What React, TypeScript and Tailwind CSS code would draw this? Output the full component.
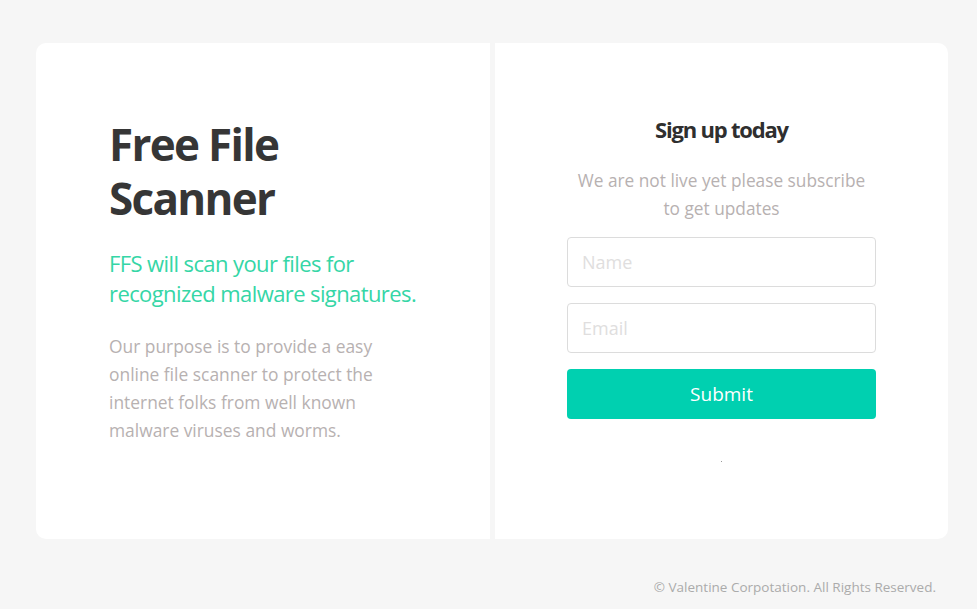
export default function App() {
  return (
    <div className="min-h-[609px] bg-[#f6f6f6] pl-[36px] pt-[43px] font-['Open_Sans',sans-serif]">
      <div className="flex h-[496px] w-[912px] gap-[5px] overflow-hidden rounded-[10px]">
        {/* left: intro */}
        <div className="w-[454px] bg-white pl-[73px] pt-[74px]">
          <h1 className="text-[44px] font-bold leading-[54px] tracking-[-1.7px] text-[#363636]">
            Free File
            <br />
            Scanner
          </h1>
          <p className="mt-[23px] w-[330px] text-[22px] leading-[30px] tracking-[-0.6px] text-[#35d6a6]">
            FFS will scan your files for recognized malware signatures.
          </p>
          <p className="mt-[24px] w-[290px] text-[17.4px] leading-[28px] text-[#b7b1b1]">
            Our purpose is to provide a easy online file scanner to protect the internet folks from well known malware
            viruses and worms.
          </p>
        </div>

        {/* right: signup form */}
        <div className="flex flex-1 flex-col items-center bg-white pt-[70px]">
          <h2 className="text-[22px] font-bold leading-[32px] tracking-[-1.2px] text-[#2f2f2f]">Sign up today</h2>
          <p className="mt-[22px] w-[300px] text-center text-[17.3px] leading-[28px] text-[#b7b1b1]">
            We are not live yet please subscribe to get updates
          </p>
          <form className="mt-[14px] flex w-[309px] flex-col gap-[16px]" onSubmit={(e) => e.preventDefault()}>
            <input
              type="text"
              placeholder="Name"
              className="h-[50px] rounded-[4px] border border-[#dcdcdc] px-[14px] text-[18px] outline-none placeholder:text-[#e0dede]"
            />
            <input
              type="email"
              placeholder="Email"
              className="h-[50px] rounded-[4px] border border-[#dcdcdc] px-[14px] text-[18px] outline-none placeholder:text-[#e0dede]"
            />
            <button type="submit" className="h-[50px] rounded-[4px] bg-[#00d0b0] text-[19px] text-white">
              Submit
            </button>
          </form>
          <div className="mt-[42px] h-[1px] w-[1px] bg-[#9a9a9a]" />
        </div>
      </div>

      <footer className="w-[912px] pt-[38px] pr-[12px] text-right text-[13.5px] text-[#ababab]">
        © Valentine Corpotation. All Rights Reserved.
      </footer>
    </div>
  );
}
